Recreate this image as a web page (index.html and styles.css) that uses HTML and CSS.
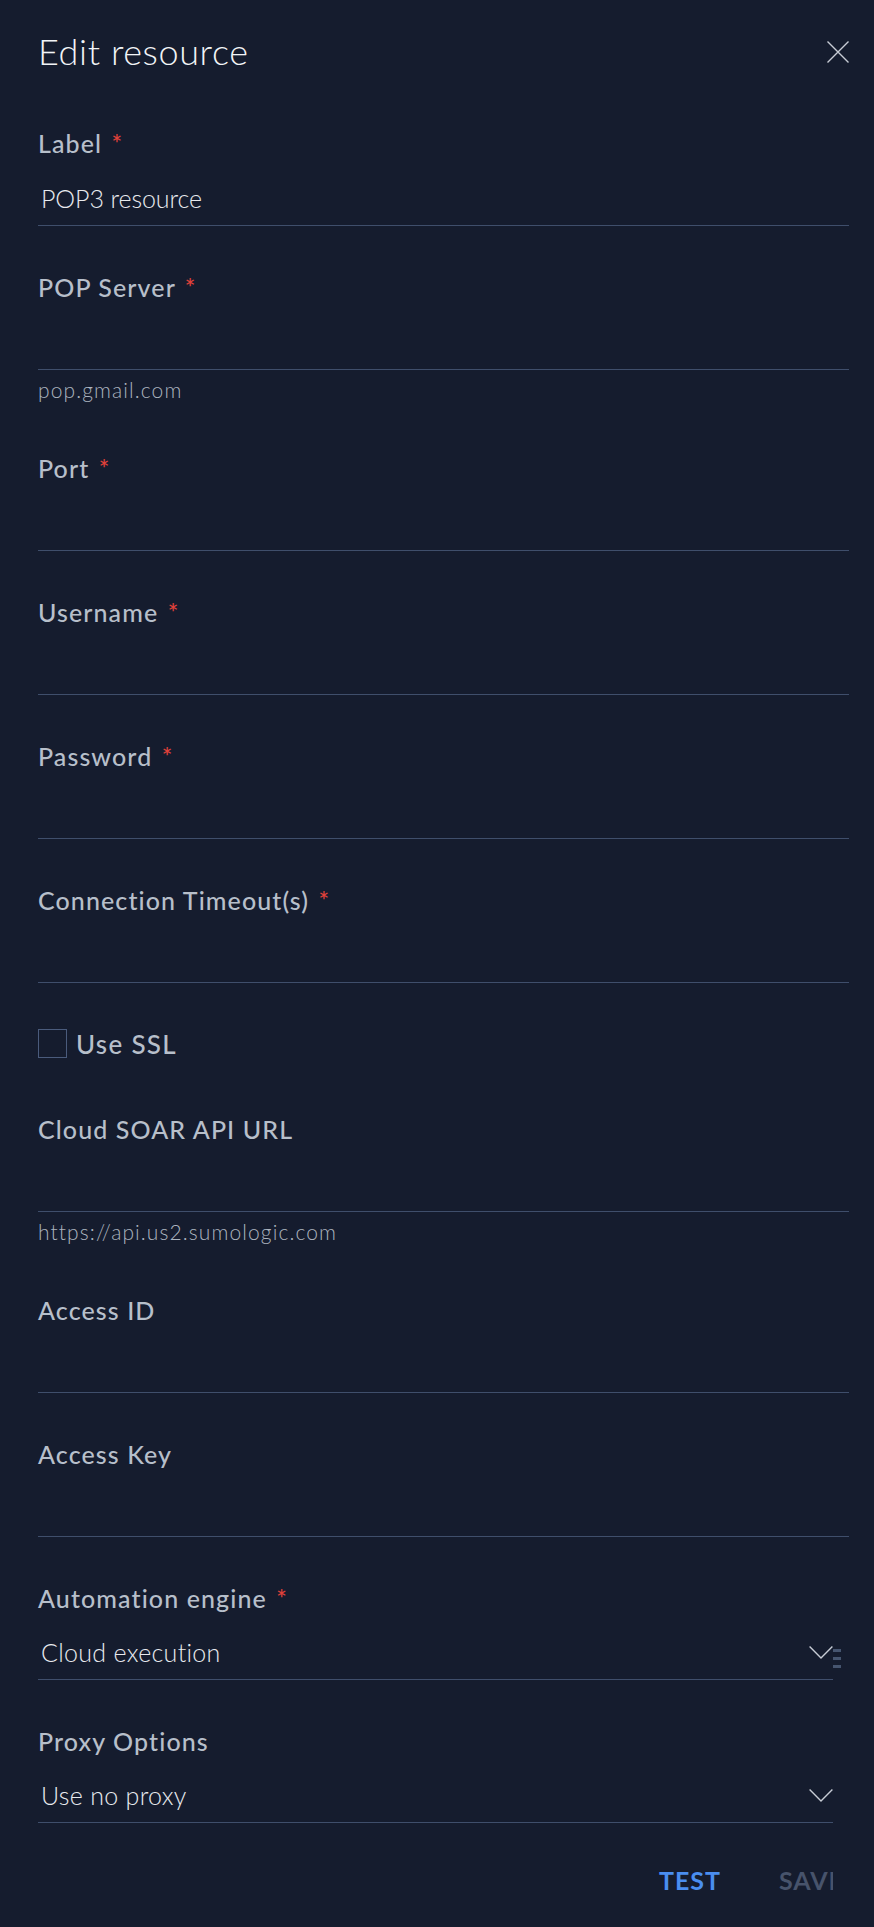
FILE: index.html
```html
<!DOCTYPE html>
<html lang="en">
<head>
<meta charset="utf-8">
<title>Edit resource</title>
<link rel="stylesheet" href="styles.css">
</head>
<body>
<div class="panel">
  <header class="header">
    <h1 class="title">Edit resource</h1>
    <button class="close" aria-label="Close">
      <svg width="22" height="22" viewBox="0 0 22 22"><path d="M0.5 0.5 L21.5 21.5 M21.5 0.5 L0.5 21.5" stroke="#c7ccd5" stroke-width="1.4" fill="none"/></svg>
    </button>
  </header>

  <div class="field">
    <div class="label">Label <span class="req">*</span></div>
    <div class="input">POP3 resource</div>
  </div>

  <div class="field">
    <div class="label">POP Server <span class="req">*</span></div>
    <div class="input"></div>
    <div class="helper">pop.gmail.com</div>
  </div>

  <div class="field">
    <div class="label">Port <span class="req">*</span></div>
    <div class="input"></div>
  </div>

  <div class="field">
    <div class="label">Username <span class="req">*</span></div>
    <div class="input"></div>
  </div>

  <div class="field">
    <div class="label">Password <span class="req">*</span></div>
    <div class="input"></div>
  </div>

  <div class="field">
    <div class="label">Connection Timeout(s) <span class="req">*</span></div>
    <div class="input"></div>
  </div>

  <div class="check-row">
    <span class="checkbox"></span>
    <span class="check-label">Use SSL</span>
  </div>

  <div class="field">
    <div class="label">Cloud SOAR API URL</div>
    <div class="input"></div>
    <div class="helper">https://api.us2.sumologic.com</div>
  </div>

  <div class="field">
    <div class="label">Access ID</div>
    <div class="input"></div>
  </div>

  <div class="field">
    <div class="label">Access Key</div>
    <div class="input"></div>
  </div>

  <div class="field">
    <div class="label">Automation engine <span class="req">*</span></div>
    <div class="select">
      <span class="select-value">Cloud execution</span>
      <svg class="chev" width="24" height="13" viewBox="0 0 24 13"><path d="M0.6 0.6 L12 12 L23.4 0.6" stroke="#c7ccd5" stroke-width="1.4" fill="none"/></svg>
      <span class="handle"><i></i><i></i><i></i></span>
    </div>
  </div>

  <div class="field field-proxy">
    <div class="label">Proxy Options</div>
    <div class="select">
      <span class="select-value">Use no proxy</span>
      <svg class="chev" width="24" height="13" viewBox="0 0 24 13"><path d="M0.6 0.6 L12 12 L23.4 0.6" stroke="#c7ccd5" stroke-width="1.4" fill="none"/></svg>
    </div>
  </div>

  <div class="footer">
    <div class="actions">
      <button class="btn btn-test">TEST</button>
      <button class="btn btn-save">SAVE</button>
    </div>
  </div>
</div>
</body>
</html>
```
FILE: styles.css
```css
html, body {
  margin: 0;
  padding: 0;
  background: #151c2e;
}
body {
  font-family: Lato, "Liberation Sans", sans-serif;
  min-height: 1927px;
}
.panel {
  padding: 30px 25px 0 38px;
}
.header {
  display: flex;
  justify-content: space-between;
  align-items: center;
  margin-bottom: 55px;
}
.title {
  margin: 0;
  font-size: 36px;
  line-height: 43px;
  font-weight: 300;
  color: #f2f4f7;
  letter-spacing: 0.6px;
}
.close {
  background: none;
  border: 0;
  padding: 0;
  width: 22px;
  height: 22px;
  display: block;
}
.close svg { display: block; }

.field {
  margin-bottom: 46px;
}
.label {
  font-size: 25px;
  line-height: 30px;
  font-weight: 500;
  color: #b7bfca;
  letter-spacing: 1.1px;
}
.req {
  color: #e0413a;
  font-size: 25px;
  margin-left: 2px;
}
.input {
  height: 30px;
  padding: 25px 0 12px 3px;
  border-bottom: 1px solid #3f4e6b;
  font-size: 25px;
  line-height: 30px;
  font-weight: 300;
  color: #e8eaee;
  letter-spacing: -0.1px;
}
.helper {
  margin-top: 8px;
  padding-bottom: 5px;
  font-size: 21px;
  line-height: 24px;
  font-weight: 300;
  color: #abb3be;
  letter-spacing: 1.1px;
}
.check-row {
  display: flex;
  align-items: center;
  gap: 9px;
  margin: 5px 0 56px;
  height: 29px;
}
.checkbox {
  width: 27px;
  height: 27px;
  border: 1px solid #4a5b7c;
  display: block;
}
.check-label {
  font-size: 26px;
  line-height: 30px;
  font-weight: 500;
  color: #b7bfca;
  letter-spacing: 1.3px;
}
.select {
  position: relative;
  width: 795px;
  box-sizing: border-box;
  display: flex;
  justify-content: space-between;
  align-items: center;
  padding: 24px 0 12px 3px;
  border-bottom: 1px solid #3f4e6b;
}
.select-value {
  font-size: 25px;
  line-height: 30px;
  font-weight: 300;
  color: #e8eaee;
  letter-spacing: 0.3px;
}
.chev { display: block; }
.handle {
  position: absolute;
  left: 100%;
  top: 36px;
  width: 8px;
  display: flex;
  flex-direction: column;
  gap: 5px;
}
.handle i {
  display: block;
  height: 3px;
  background: #46556f;
}
.field-proxy {
  margin-top: 2px;
  margin-bottom: 0;
}
.footer {
  width: 795px;
  overflow: hidden;
  margin-top: 42px;
}
.actions {
  display: flex;
  justify-content: flex-end;
  gap: 58px;
  width: 806px;
}
.btn {
  background: none;
  border: 0;
  padding: 0;
  font-family: Lato, "Liberation Sans", sans-serif;
  font-size: 25px;
  line-height: 30px;
  font-weight: 700;
  letter-spacing: 1px;
  white-space: nowrap;
}
.btn-test { color: #4a8ef0; }
.btn-save { color: #47536b; }
```
